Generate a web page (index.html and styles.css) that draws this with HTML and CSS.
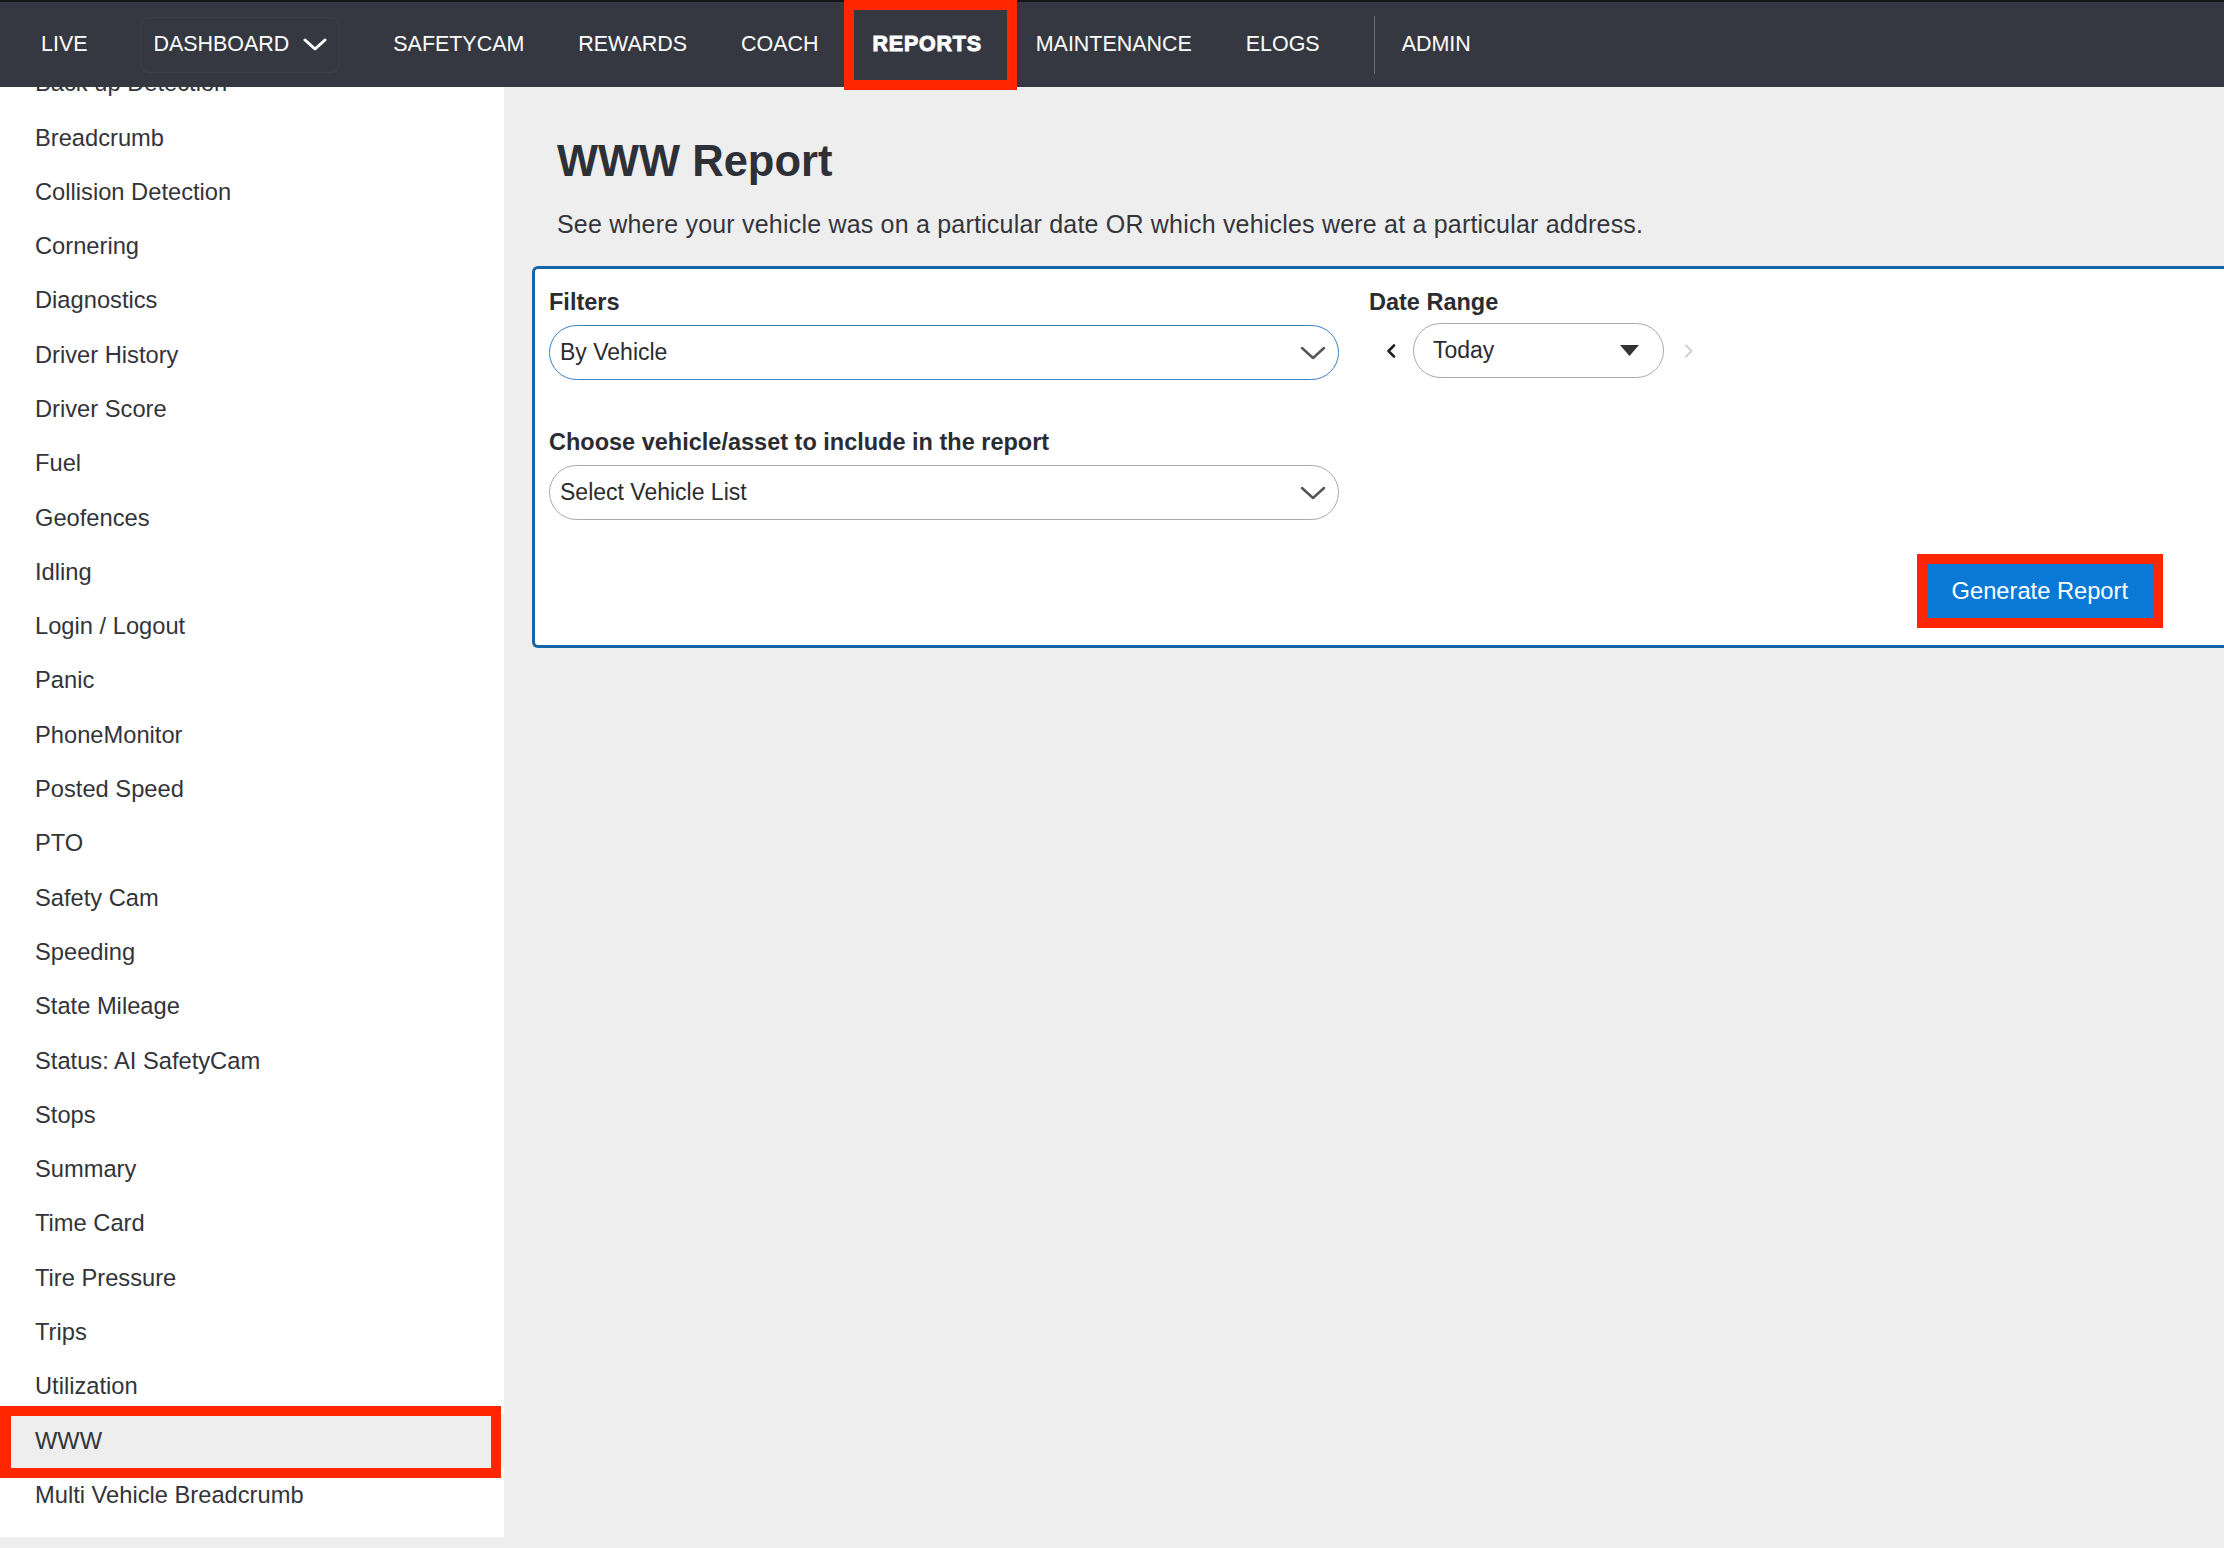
FILE: index.html
```html
<!DOCTYPE html>
<html lang="en">
<head>
  <meta charset="UTF-8">
  <title>WWW Report</title>
  <link rel="stylesheet" href="styles.css">
</head>
<body>

<nav class="topnav">
  <a class="nav-item">LIVE</a>
  <a class="nav-item nav-dashboard">
    <span class="dash-box">DASHBOARD
      <svg class="dash-chevron" width="24" height="13" viewBox="0 0 24 13"><path d="M2 2 L12 11 L22 2" fill="none" stroke="#fff" stroke-width="3" stroke-linecap="round" stroke-linejoin="round"/></svg>
    </span>
  </a>
  <a class="nav-item">SAFETYCAM</a>
  <a class="nav-item">REWARDS</a>
  <a class="nav-item">COACH</a>
  <a class="nav-item nav-active">REPORTS</a>
  <a class="nav-item">MAINTENANCE</a>
  <a class="nav-item">ELOGS</a>
  <span class="nav-sep"></span>
  <a class="nav-item nav-admin">ADMIN</a>
</nav>

<div class="layout">
  <aside class="sidebar">
    <ul class="report-list">
      <li>Back up Detection</li>
      <li>Breadcrumb</li>
      <li>Collision Detection</li>
      <li>Cornering</li>
      <li>Diagnostics</li>
      <li>Driver History</li>
      <li>Driver Score</li>
      <li>Fuel</li>
      <li>Geofences</li>
      <li>Idling</li>
      <li>Login / Logout</li>
      <li>Panic</li>
      <li>PhoneMonitor</li>
      <li>Posted Speed</li>
      <li>PTO</li>
      <li>Safety Cam</li>
      <li>Speeding</li>
      <li>State Mileage</li>
      <li>Status: AI SafetyCam</li>
      <li>Stops</li>
      <li>Summary</li>
      <li>Time Card</li>
      <li>Tire Pressure</li>
      <li>Trips</li>
      <li>Utilization</li>
      <li class="active">WWW</li>
      <li>Multi Vehicle Breadcrumb</li>
    </ul>
  </aside>

  <main class="content">
    <h1 class="page-title">WWW Report</h1>
    <p class="page-desc">See where your vehicle was on a particular date OR which vehicles were at a particular address.</p>

    <div class="report-card">
      <div class="card-grid">
        <div class="col-left">
          <label class="field-label">Filters</label>
          <div class="select select-focus">
            <span>By Vehicle</span>
            <svg width="26" height="14" viewBox="0 0 26 14"><path d="M2 2 L13 12 L24 2" fill="none" stroke="#555" stroke-width="2.5" stroke-linecap="round" stroke-linejoin="round"/></svg>
          </div>

          <label class="field-label label-gap">Choose vehicle/asset to include in the report</label>
          <div class="select">
            <span>Select Vehicle List</span>
            <svg width="26" height="14" viewBox="0 0 26 14"><path d="M2 2 L13 12 L24 2" fill="none" stroke="#555" stroke-width="2.5" stroke-linecap="round" stroke-linejoin="round"/></svg>
          </div>
        </div>

        <div class="col-right">
          <label class="field-label">Date Range</label>
          <div class="date-range">
            <svg class="range-prev" width="10" height="14" viewBox="0 0 10 14"><path d="M8 1.5 L2.5 7 L8 12.5" fill="none" stroke="#222" stroke-width="2.6" stroke-linecap="round" stroke-linejoin="round"/></svg>
            <div class="select select-date">
              <span>Today</span>
              <svg width="19" height="11" viewBox="0 0 19 11"><polygon points="0,0 19,0 9.5,11" fill="#333"/></svg>
            </div>
            <svg class="range-next" width="10" height="14" viewBox="0 0 10 14"><path d="M2 1.5 L7.5 7 L2 12.5" fill="none" stroke="#cfcfcf" stroke-width="1.8" stroke-linecap="round" stroke-linejoin="round"/></svg>
          </div>
        </div>
      </div>

      <div class="card-actions">
        <button class="btn-generate">Generate Report</button>
      </div>
    </div>
  </main>
</div>

</body>
</html>
```

FILE: styles.css
```css
body {
  margin: 0;
  height: 1548px;
  overflow: hidden;
  background: #eeeeee;
  font-family: "Liberation Sans", Arial, sans-serif;
  color: #333;
}

/* top navigation */
.topnav {
  display: flex;
  align-items: center;
  height: 85px;
  border-top: 2px solid #15161a;
  background: #363841;
  padding-left: 14px;
}
.nav-item {
  position: relative;
  padding: 0 27px;
  color: #fff;
  font-size: 21.45px;
  line-height: 85px;
  white-space: nowrap;
}
.nav-dashboard {
  padding: 0 26px;
}
.dash-box {
  display: flex;
  align-items: center;
  gap: 14px;
  height: 54px;
  padding: 0 12px;
  border: 1px solid rgba(255,255,255,0.04);
  border-radius: 10px;
}
.nav-active {
  font-weight: 700;
  letter-spacing: 0.8px;
  -webkit-text-stroke: 1px #fff;
}
.nav-active::after {
  content: "";
  position: absolute;
  top: -2px;
  bottom: -3px;
  left: -2px;
  right: -8px;
  border: 10px solid #ff2600;
}
.nav-sep {
  width: 1px;
  height: 58px;
  background: #6c6e76;
  margin-left: 27px;
}

/* page body */
.layout {
  display: flex;
  align-items: flex-start;
}
.sidebar {
  width: 504px;
  height: 1450px;
  flex: none;
  background: #fff;
  overflow: hidden;
}
.report-list {
  list-style: none;
  margin: -30.8px 0 0;
  padding: 0;
}
.report-list li {
  position: relative;
  height: 54.3px;
  line-height: 54.3px;
  padding-left: 35px;
  font-size: 23.7px;
  color: #33343a;
}
.report-list li.active {
  background: #eeeeee;
}
.report-list li.active::after {
  content: "";
  position: absolute;
  top: -8px;
  bottom: -10px;
  left: 0;
  right: 3px;
  border: 10px solid #ff2600;
  border-left-width: 11px;
}

.content {
  flex: 1;
  min-width: 0;
  padding: 49px 0 0 28px;
}
.page-title {
  margin: 0 0 0 25px;
  font-size: 43.5px;
  line-height: 50px;
  font-weight: 700;
  color: #2e3037;
}
.page-desc {
  margin: 23px 0 0 25px;
  font-size: 25px;
  line-height: 31px;
  letter-spacing: 0.2px;
  color: #34353b;
}

/* report card */
.report-card {
  width: 1604px;
  margin-top: 26px;
  background: #fff;
  border: 3px solid #1565a8;
  border-right: none;
  border-radius: 6px 0 0 6px;
  padding: 20px 80px 27px 14px;
}
.card-grid {
  display: grid;
  grid-template-columns: 790px 1fr;
  gap: 30px;
}
.field-label {
  display: block;
  font-size: 23.5px;
  line-height: 27px;
  font-weight: 700;
  color: #2b2c31;
  margin-bottom: 9px;
}
.label-gap {
  margin-top: 49px;
}
.select {
  display: flex;
  align-items: center;
  justify-content: space-between;
  box-sizing: border-box;
  height: 55px;
  padding: 0 12px 0 10px;
  border: 1px solid #a9a9a9;
  border-radius: 28px;
  background: #fff;
  font-size: 23px;
  color: #2b2c31;
}
.select-focus {
  border-color: #3a80c4;
}
.date-range {
  display: flex;
  align-items: center;
  margin-top: -2px;
}
.range-prev {
  margin: 0 17px 0 17px;
}
.select-date {
  width: 251px;
  padding: 0 24px 0 19px;
}
.range-next {
  margin-left: 20px;
}

.card-actions {
  display: flex;
  justify-content: flex-end;
  margin-top: 44px;
}
.btn-generate {
  position: relative;
  height: 54px;
  padding: 0 25px;
  border: none;
  background: #0a79d6;
  color: #fff;
  font-family: "Liberation Sans", Arial, sans-serif;
  font-size: 23.7px;
}
.btn-generate::after {
  content: "";
  position: absolute;
  top: -10px;
  bottom: -10px;
  left: -10px;
  right: -10px;
  border: 10px solid #ff2600;
}
```
